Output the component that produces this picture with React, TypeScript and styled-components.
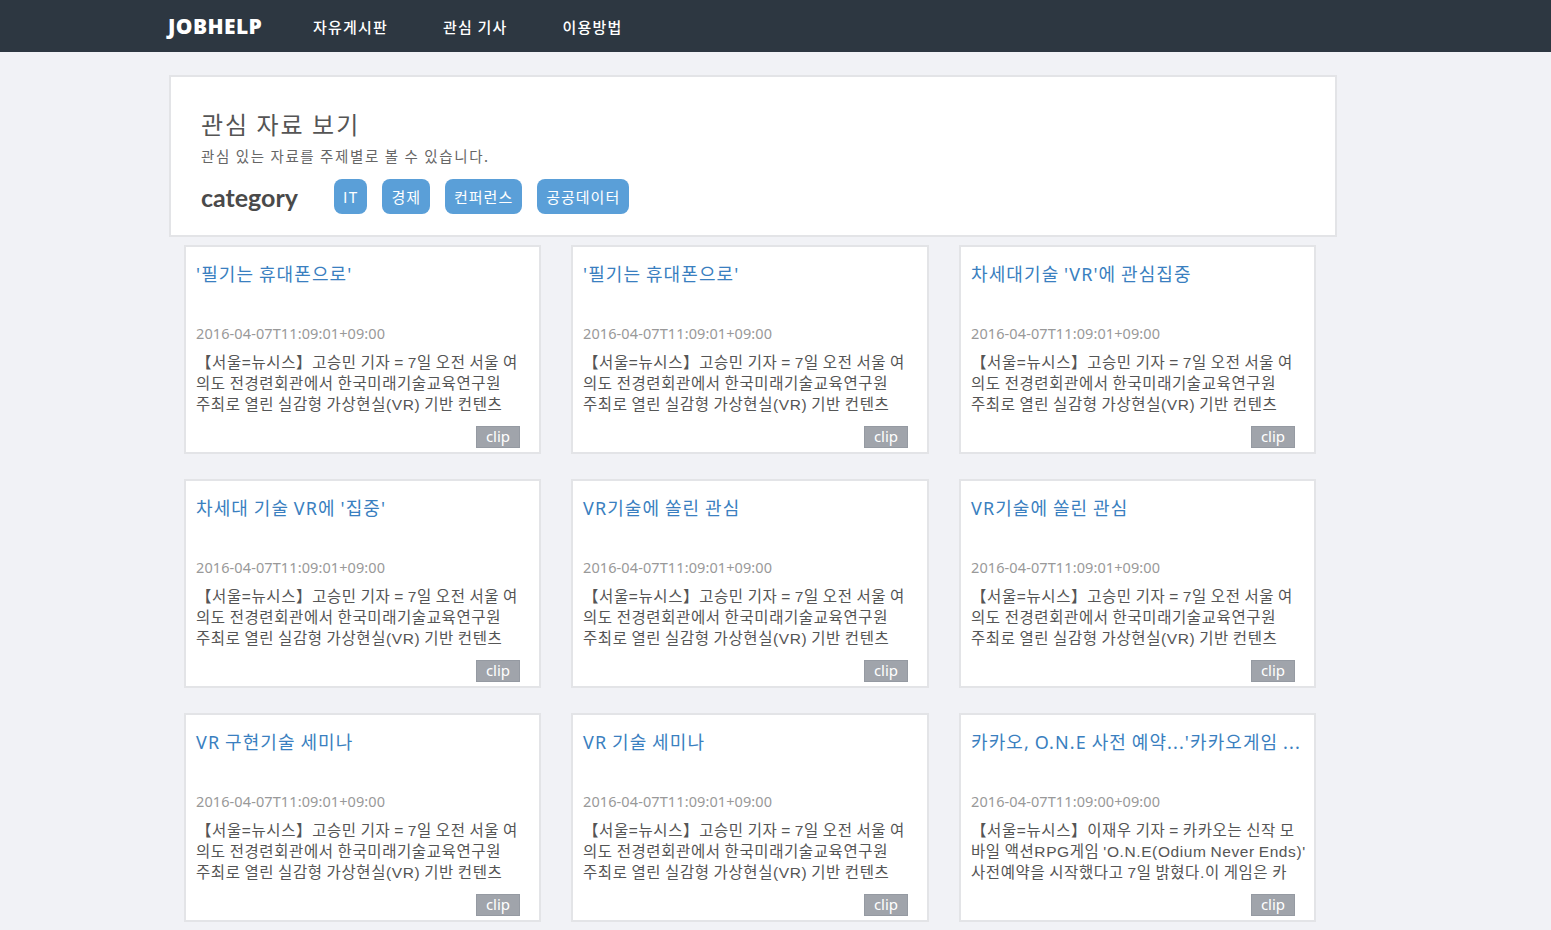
import React from 'react';
import styled, { createGlobalStyle } from 'styled-components';

const GlobalStyle = createGlobalStyle`
  body {
    margin: 0;
    background-color: #f1f2f6;
    font-family: "Noto Sans", "Noto Sans CJK KR", sans-serif;
  }
`;

const SEOUL = [
  '【서울=뉴시스】고승민 기자 = 7일 오전 서울 여',
  '의도 전경련회관에서 한국미래기술교육연구원',
  '주최로 열린 실감형 가상현실(VR) 기반 컨텐츠',
];

const KAKAO = [
  '【서울=뉴시스】이재우 기자 = 카카오는 신작 모',
  "바일 액션RPG게임 'O.N.E(Odium Never Ends)'",
  '사전예약을 시작했다고 7일 밝혔다.이 게임은 카',
];

const articles = [
  { id: 1, title: "'필기는 휴대폰으로'", date: '2016-04-07T11:09:01+09:00', lines: SEOUL },
  { id: 2, title: "'필기는 휴대폰으로'", date: '2016-04-07T11:09:01+09:00', lines: SEOUL },
  { id: 3, title: "차세대기술 'VR'에 관심집중", date: '2016-04-07T11:09:01+09:00', lines: SEOUL },
  { id: 4, title: "차세대 기술 VR에 '집중'", date: '2016-04-07T11:09:01+09:00', lines: SEOUL },
  { id: 5, title: 'VR기술에 쏠린 관심', date: '2016-04-07T11:09:01+09:00', lines: SEOUL },
  { id: 6, title: 'VR기술에 쏠린 관심', date: '2016-04-07T11:09:01+09:00', lines: SEOUL },
  { id: 7, title: 'VR 구현기술 세미나', date: '2016-04-07T11:09:01+09:00', lines: SEOUL },
  { id: 8, title: 'VR 기술 세미나', date: '2016-04-07T11:09:01+09:00', lines: SEOUL },
  {
    id: 9,
    title: "카카오, O.N.E 사전 예약...'카카오게임 ...",
    date: '2016-04-07T11:09:00+09:00',
    lines: KAKAO,
  },
];

const categories = ['IT', '경제', '컨퍼런스', '공공데이터'];

const App = () => {
  return (
    <>
      <GlobalStyle />
      <NavBar>
        <Brand>JOBHELP</Brand>
        <NavMenu>
          <NavItem>자유게시판</NavItem>
          <NavItem>관심 기사</NavItem>
          <NavItem>이용방법</NavItem>
        </NavMenu>
      </NavBar>

      <Main>
        <IntroPanel>
          <PageTitle>관심 자료 보기</PageTitle>
          <PageDesc>관심 있는 자료를 주제별로 볼 수 있습니다.</PageDesc>
          <CategoryRow>
            <CategoryLabel>category</CategoryLabel>
            <CategoryList>
              {categories.map((name) => (
                <CategoryButton key={name} type="button">
                  {name}
                </CategoryButton>
              ))}
            </CategoryList>
          </CategoryRow>
        </IntroPanel>

        <CardGrid>
          {articles.map(({ id, title, date, lines }) => (
            <Card key={id}>
              <CardTitle>{title}</CardTitle>
              <CardDate>{date}</CardDate>
              <CardBody>
                {lines.map((line, index) => (
                  <BodyLine key={index.toString()}>{line}</BodyLine>
                ))}
              </CardBody>
              <CardFooter>
                <ClipButton type="button">clip</ClipButton>
              </CardFooter>
            </Card>
          ))}
        </CardGrid>
      </Main>
    </>
  );
};

const NavBar = styled.nav`
  display: flex;
  align-items: center;
  height: 52px;
  padding-left: 168px;
  background-color: #2d3741;
`;

const Brand = styled.span`
  width: 145px;
  font-family: "Open Sans", sans-serif;
  font-size: 21px;
  font-weight: 800;
  color: #fff;
  letter-spacing: 0.4px;
`;

const NavMenu = styled.div`
  display: flex;
  gap: 55px;
`;

const NavItem = styled.a`
  font-family: "Noto Sans CJK KR", sans-serif;
  font-size: 15px;
  font-weight: 500;
  letter-spacing: 1.2px;
  color: #fff;
  cursor: pointer;
`;

const Main = styled.main`
  padding: 23px 0 40px 169px;
`;

const IntroPanel = styled.section`
  box-sizing: border-box;
  width: 1168px;
  height: 162px;
  padding: 30px 30px 0;
  background-color: #fff;
  border: 2px solid #e3e4e7;
`;

const PageTitle = styled.h1`
  margin: 0;
  font-family: "Noto Sans CJK KR", sans-serif;
  font-size: 24px;
  font-weight: 400;
  line-height: 34px;
  letter-spacing: 2px;
  color: #555;
`;

const PageDesc = styled.p`
  margin: 6px 0 0;
  font-family: "Noto Sans CJK KR", sans-serif;
  font-size: 14.5px;
  line-height: 18px;
  letter-spacing: 1.6px;
  color: #666;
`;

const CategoryRow = styled.div`
  display: flex;
  align-items: center;
  margin-top: 14px;
`;

const CategoryLabel = styled.span`
  width: 133px;
  font-family: Lato, sans-serif;
  font-size: 25px;
  font-weight: 700;
  color: #4a4a4a;
`;

const CategoryList = styled.div`
  display: flex;
  gap: 15px;
`;

const CategoryButton = styled.button`
  height: 35px;
  padding: 0 9px;
  border: none;
  border-radius: 8px;
  background-color: #5a9fd8;
  font-family: "Noto Sans CJK KR", sans-serif;
  font-size: 15px;
  letter-spacing: 1px;
  color: #fff;
  cursor: pointer;
`;

const CardGrid = styled.div`
  display: grid;
  grid-template-columns: 357px 358px 357px;
  column-gap: 30px;
  row-gap: 25px;
  margin-top: 8px;
  padding-left: 15px;
`;

const Card = styled.article`
  box-sizing: border-box;
  display: flex;
  flex-direction: column;
  height: 209px;
  padding: 14px 10px 0 10px;
  background-color: #fff;
  border: 2px solid #e3e4e7;
`;

const CardTitle = styled.h3`
  margin: 0;
  font-family: "Noto Sans", "Noto Sans CJK KR", sans-serif;
  font-size: 18px;
  font-weight: 400;
  line-height: 26px;
  letter-spacing: 1.1px;
  word-spacing: -1px;
  color: #3a7fc0;
  white-space: nowrap;
`;

const CardDate = styled.div`
  margin-top: 36px;
  font-family: "Noto Sans", sans-serif;
  font-size: 14.5px;
  line-height: 20px;
  letter-spacing: 0.1px;
  color: #999;
`;

const CardBody = styled.div`
  margin-top: 9px;
  font-family: "Liberation Sans", "Noto Sans CJK KR", sans-serif;
  font-size: 15.5px;
  line-height: 21px;
  letter-spacing: 0.6px;
  word-spacing: -1px;
  color: #555;
`;

const BodyLine = styled.div`
  white-space: nowrap;
`;

const CardFooter = styled.div`
  display: flex;
  justify-content: flex-end;
  margin-top: 11px;
  padding-right: 9px;
`;

const ClipButton = styled.button`
  width: 44px;
  height: 22px;
  padding: 0 0 2px;
  border: 1px solid #959aa2;
  background-color: #a0a4ab;
  font-family: "Noto Sans", sans-serif;
  font-size: 15px;
  line-height: 17px;
  color: #fff;
  cursor: pointer;
`;

export default App;
